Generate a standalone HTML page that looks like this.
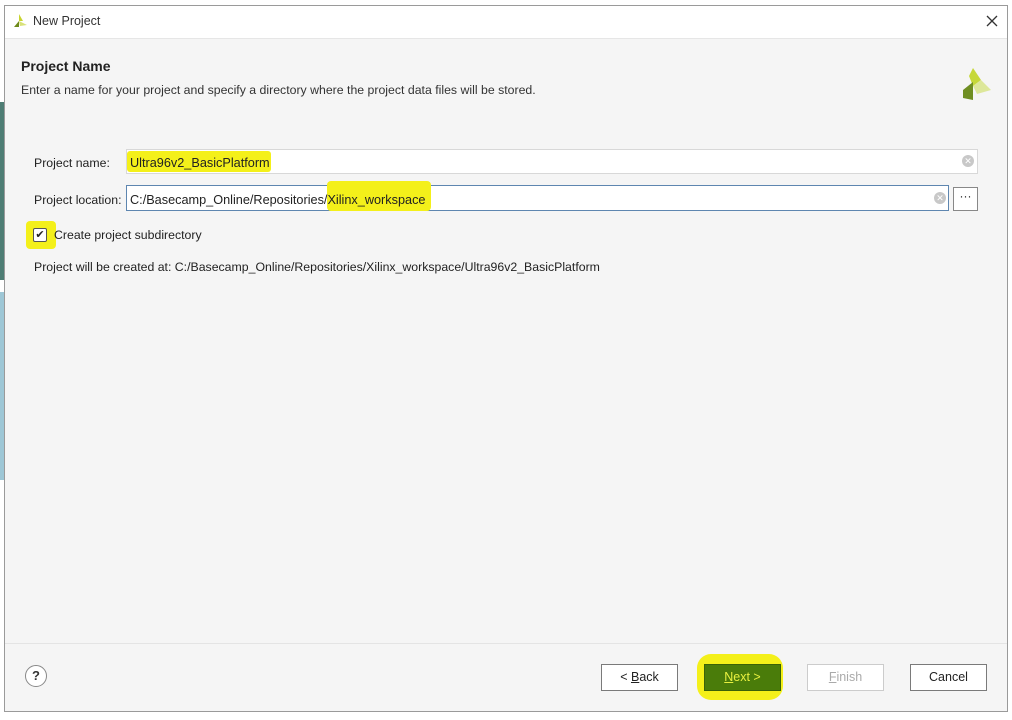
<!DOCTYPE html>
<html><head><style>
body{margin:0;width:1012px;height:720px;background:#fff;position:relative;overflow:hidden;font-family:"Liberation Sans",sans-serif;font-size:12.3px;color:#222}
.a{position:absolute}
.win{left:4px;top:5px;width:1002px;height:705px;border:1px solid #9a9a9a;background:#f5f5f5}
.hl{background:#f4f01a}
.btn{position:absolute;top:658px;height:25px;border:1px solid #7a7a7a;background:#fff;text-align:center;line-height:25px;font-size:12.5px}
</style></head><body>
<div class="a" style="left:0;top:102px;width:4px;height:178px;background:#4e7d74"></div>
<div class="a" style="left:0;top:292px;width:4px;height:188px;background:#9ec7d6"></div>
<div class="a win">
 <div class="a" style="left:0;top:0;width:1002px;height:32px;background:#fff;border-bottom:1px solid #e6e6e6"></div>
 <svg class="a" style="left:7px;top:8px" width="16" height="14" viewBox="0 0 16 14"><path d="M7 0 L11 7 L7 7Z" fill="#c8d430"/><path d="M2 13 L7 7 L7 13Z" fill="#6e8a1a"/><path d="M7 7 L15 11 L8 12Z" fill="#d9e27a"/></svg>
 <div class="a" style="left:28px;top:8px;font-size:12.5px;color:#333">New Project</div>
 <svg class="a" style="left:981px;top:9px" width="12" height="12" viewBox="0 0 12 12"><path d="M1 1L11 11M11 1L1 11" stroke="#333" stroke-width="1.3"/></svg>
 <div class="a" style="left:16px;top:52px;font-size:14px;font-weight:bold;color:#222">Project Name</div>
 <div class="a" style="left:16px;top:77px;font-size:12.3px;color:#333">Enter a name for your project and specify a directory where the project data files will be stored.</div>
 <svg class="a" style="left:954px;top:62px" width="34" height="34" viewBox="0 0 34 34"><path d="M14 0 L22 12 L14 18 L10 8Z" fill="#c6d83a"/><path d="M4 22 L14 14 L14 32 L4 30Z" fill="#6f8e22"/><path d="M14 18 L22 12 L32 22 L18 26Z" fill="#dde79a"/></svg>
 <div class="a" style="left:29px;top:150px">Project name:</div>
 <div class="a" style="left:121px;top:143px;width:850px;height:23px;background:#fff;border:1px solid #d8d8d8"></div>
 <div class="a hl" style="left:122px;top:145px;width:144px;height:21px;border-radius:3px"></div>
 <div class="a" style="left:125px;top:150px;font-size:12.7px">Ultra96v2_BasicPlatform</div>
 <div class="a" style="left:957px;top:149px;width:12px;height:12px;border-radius:50%;background:#c8c8c8;color:#fff;font-size:9px;line-height:12px;text-align:center">✕</div>
 <div class="a" style="left:29px;top:187px">Project location:</div>
 <div class="a" style="left:121px;top:179px;width:821px;height:24px;background:#fff;border:1px solid #5e86b0"></div>
 <div class="a hl" style="left:322px;top:175px;width:104px;height:30px;border-radius:4px"></div>
 <div class="a" style="left:125px;top:187px;font-size:12.7px">C:/Basecamp_Online/Repositories/Xilinx_workspace</div>
 <div class="a" style="left:929px;top:186px;width:12px;height:12px;border-radius:50%;background:#c8c8c8;color:#fff;font-size:9px;line-height:12px;text-align:center">✕</div>
 <div class="a" style="left:948px;top:181px;width:23px;height:22px;background:#fff;border:1px solid #888;text-align:center;line-height:16px;font-size:12px">···</div>
 <div class="a hl" style="left:21px;top:215px;width:30px;height:28px;border-radius:4px"></div>
 <div class="a" style="left:28px;top:222px;width:12px;height:12px;border:1px solid #555;background:#fff;border-radius:2px;font-size:11px;line-height:12px;text-align:center">✔</div>
 <div class="a" style="left:49px;top:222px">Create project subdirectory</div>
 <div class="a" style="left:29px;top:254px">Project will be created at: C:/Basecamp_Online/Repositories/Xilinx_workspace/Ultra96v2_BasicPlatform</div>
 <div class="a" style="left:0;top:637px;width:1002px;height:1px;background:#e4e4e4"></div>
 <div class="a" style="left:20px;top:659px;width:20px;height:20px;border:1.5px solid #888;border-radius:50%;background:#fff;text-align:center;line-height:20px;font-weight:bold;font-size:13px;color:#333">?</div>
 <div class="btn" style="left:596px;width:75px">&lt; <u>B</u>ack</div>
 <div class="a hl" style="left:692px;top:648px;width:86px;height:46px;border-radius:14px"></div>
 <div class="btn" style="left:699px;width:75px;background:#4a7c0a;border-color:#3a6208;color:#e8f040"><u>N</u>ext &gt;</div>
 <div class="btn" style="left:802px;width:75px;border-color:#ccc;color:#aaa"><u>F</u>inish</div>
 <div class="btn" style="left:905px;width:75px">Cancel</div>
</div>
</body></html>
